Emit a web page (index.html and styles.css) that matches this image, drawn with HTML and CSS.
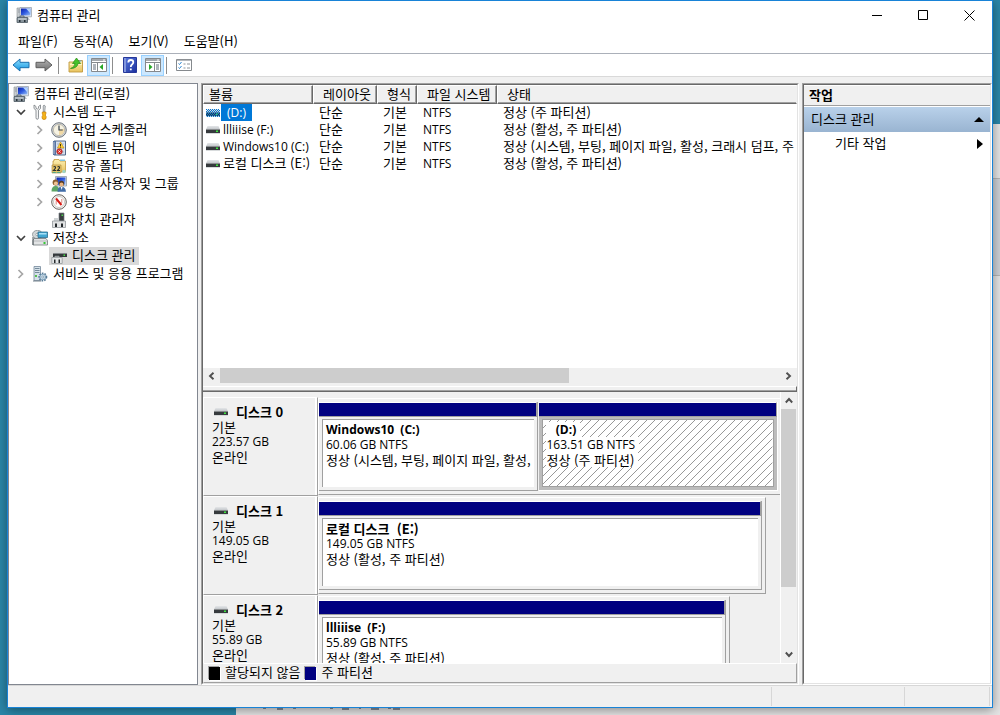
FILE: index.html
```html
<!DOCTYPE html>
<html lang="ko">
<head>
<meta charset="utf-8">
<title>컴퓨터 관리</title>
<link rel="stylesheet" href="styles.css">
</head>
<body>
<svg class="sprite" aria-hidden="true">
  <defs>
    <linearGradient id="gBlue" x1="0" y1="0" x2="1" y2="1"><stop offset="0" stop-color="#0a1fa8"/><stop offset=".5" stop-color="#2f5be0"/><stop offset="1" stop-color="#9cc4f5"/></linearGradient>
    <linearGradient id="gBack" x1="0" y1="0" x2="0" y2="1"><stop offset="0" stop-color="#8fe0ff"/><stop offset="1" stop-color="#1193e0"/></linearGradient>
    <linearGradient id="gFwd" x1="0" y1="0" x2="0" y2="1"><stop offset="0" stop-color="#b4b4b4"/><stop offset="1" stop-color="#6e6e6e"/></linearGradient>
    <linearGradient id="gFold" x1="0" y1="0" x2="0" y2="1"><stop offset="0" stop-color="#fdf0b4"/><stop offset="1" stop-color="#e8c25c"/></linearGradient>
    <linearGradient id="gHelp" x1="0" y1="0" x2="1" y2="1"><stop offset="0" stop-color="#5a7be0"/><stop offset="1" stop-color="#1b2f9c"/></linearGradient>
    <linearGradient id="gTop" x1="0" y1="0" x2="0" y2="1"><stop offset="0" stop-color="#e4e6e8"/><stop offset="1" stop-color="#bfc3c7"/></linearGradient>
    <symbol id="computer" viewBox="0 0 16 16">
      <path d="M1 1h4v9H1z" fill="#c9cdd0" stroke="#8b9095" stroke-width=".6"/><path d="M2 3h2M2 5h2" stroke="#7d858c" stroke-width=".7"/>
      <path d="M4 .5h11.5v9.300H4z" fill="#eceff2" stroke="#9aa3ad" stroke-width=".8"/><path d="M5 1.500h9.500v7H5z" fill="url(#gBlue)"/><path d="M10 1.500h4.500v5z" fill="#b4d4fa"/>
      <path d="M8 10h4l2 3H7z" fill="#b9c1ca"/>
      <path d="M1 10.500h10.500v5H1z" fill="#87939b" stroke="#4e5b63" stroke-width=".8"/><path d="M2 12h8.500" stroke="#dfe6ea"/><path d="M3 13h1.500v2H3zM8 13h1.500v2H8z" fill="#29333a"/><path d="M4 10.500V9h4v1.500" fill="none" stroke="#5b6870"/>
    </symbol>
    <symbol id="tools" viewBox="0 0 16 16">
      <path d="M2 1v3.500l2 1.700v7.600c0 2 2.500 2 2.500 0V6.200l2-1.700V1L6.500 2.500v1.800l-1.200.8L4 4.300V2.500z" fill="#f2f3f4" stroke="#777c81" stroke-width=".8"/>
      <path d="M12 1l1.300 1-.6 6h-1.400L11.200 2z" fill="#d9dde0" stroke="#777c81" stroke-width=".7"/>
      <path d="M10.300 8h3.600v2l-.7 1 .9 1.500v1.500c0 2-4 2-4 0v-1.500l.9-1.500-.7-1z" fill="#f5b418" stroke="#c77f08" stroke-width=".7"/>
    </symbol>
    <symbol id="clock" viewBox="0 0 16 16">
      <circle cx="8" cy="8" r="7.300" fill="#d4d8dc" stroke="#6f757b"/><circle cx="8" cy="8" r="5.600" fill="#f7f3e3" stroke="#a8a08a" stroke-width=".6"/><path d="M8 8l5-1a5 5 0 0 1-5 6z" fill="#f1d9a4"/><path d="M8 3.500V8h3.700" fill="none" stroke="#38434d" stroke-width="1.200"/>
    </symbol>
    <symbol id="events" viewBox="0 0 16 16">
      <path d="M3 1h11.500v14H3z" fill="#d6e0ee" stroke="#53698a"/><path d="M2 1h3v14H2z" fill="#5573a3"/><path d="M1 3h3M1 5h3M1 7h3M1 9h3M1 11h3M1 13h3" stroke="#d0d7df" stroke-width=".8"/>
      <path d="M6 4h7M6 8h7M6 12h7" stroke="#8b9cb5" stroke-width=".6"/><path d="M9.500 2l3.500 6H6.500z" fill="#ffd23a" stroke="#c58c08" stroke-width=".6"/><path d="M9.500 4v2.400M9.500 6.900v.7" stroke="#332200" stroke-width=".9"/>
      <circle cx="8.500" cy="11.500" r="2.800" fill="#d9302c" stroke="#981713" stroke-width=".5"/><path d="M7.400 10.400l2.200 2.200M9.600 10.400l-2.200 2.200" stroke="#fff" stroke-width=".8"/>
    </symbol>
    <symbol id="shared" viewBox="0 0 16 16">
      <path d="M3 3V1.500h5l1 1.500h5.500v11H2V3z" fill="url(#gFold)" stroke="#c39b3c" stroke-width=".8"/><path d="M9 1.500h5V3H9z" fill="#7fc3df"/>
      <path d="M1 7h9v8H1z" fill="#e8c66a" stroke="#a88436" stroke-width=".6"/>
      <path d="M2.500 9q1.500-1 2 0t-2 3.500h2.500M6.500 9q1.500-1 2 0t-2 3.500H9" fill="none" stroke="#29302f" stroke-width="1.100"/><path d="M1 15q2-2.500 4.500 0 2-2.500 4.500 0z" fill="#52a888"/><circle cx="13" cy="13.500" r="1.800" fill="#9fd5c5"/>
    </symbol>
    <symbol id="users" viewBox="0 0 16 16">
      <path d="M4.500.5h11v9.500h-11z" fill="#dfe4ea" stroke="#929ba5" stroke-width=".8"/><path d="M5.500 1.500h9v7.500h-9z" fill="url(#gBlue)"/>
      <circle cx="4.500" cy="6.500" r="2.900" fill="#8b5f31"/><circle cx="4.900" cy="7.400" r="2" fill="#efc394"/><path d="M.5 15.500q0-5.500 4-5.500t4 5.500z" fill="#5da464"/>
      <circle cx="10.500" cy="7.500" r="2.700" fill="#553b25"/><circle cx="10.500" cy="8.500" r="2" fill="#e8b482"/><path d="M6.500 15.700q0-5 4-5t4.500 5z" fill="#426da8"/><path d="M9.700 11h1.800l-.8 3z" fill="#fff"/>
    </symbol>
    <symbol id="perf" viewBox="0 0 16 16">
      <circle cx="8" cy="8" r="7.300" fill="#f5f5f5" stroke="#68625c"/><circle cx="8" cy="8" r="5.500" fill="#fff" stroke="#b8b0a8" stroke-width=".7"/><path d="M5.200 10.500V6.500M10.800 9V5" stroke="#d9867e" stroke-width="1"/><path d="M5 4.500l5.500 6.500" stroke="#d81a14" stroke-width="2"/>
    </symbol>
    <symbol id="device" viewBox="0 0 16 16">
      <path d="M8 1h5v10H8z" fill="#383d40" stroke="#777d81" stroke-width=".7"/><path d="M10.500 2.500h1.500v1.500h-1.500z" fill="#4cd34c"/><path d="M3 6h5v3H3z" fill="#d0d4d6"/>
      <path d="M1.500 9h13v6.500h-13z" fill="#e0e2e3" stroke="#92979a" stroke-width=".8"/><path d="M4 11.500h2V15H4zM10 11.500h2V15h-2z" fill="#24292c"/>
    </symbol>
    <symbol id="storage" viewBox="0 0 16 16">
      <ellipse cx="5.500" cy="4.500" rx="5" ry="4.200" fill="#d2d7d8" stroke="#858d91" stroke-width=".8"/><circle cx="5" cy="4.500" r="1.200" fill="#fff" stroke="#7b8488" stroke-width=".6"/>
      <path d="M6 2h9.500v5.500H6z" fill="#42a7d2" stroke="#2a6c8e" stroke-width=".8"/><path d="M7 3h7.500v1.500H7z" fill="#a9e0f6"/>
      <path d="M2 8.500h12l1.500 2v4.500H1v-4.500z" fill="#e2e4e5" stroke="#72787c" stroke-width=".8"/><path d="M1.500 11H15" stroke="#a6abad" stroke-width=".7"/><path d="M11.500 12h2v2h-2z" fill="#35c835"/><path d="M1 7v8" stroke="#4f585c"/>
    </symbol>
    <symbol id="diskmgmt" viewBox="0 0 16 16">
      <path d="M4 4h11l1 1.500H2z" fill="#d4d7d9"/><path d="M2 5.500h14V9H2z" fill="#35393c"/><path d="M12.500 6.500H14V8h-1.500z" fill="#43e043"/>
      <path d="M.8 9.500h10.400v6H.8z" fill="#e4e6e7" stroke="#8d9295" stroke-width=".7"/><path d="M3 11.500h1.500V15H3zM7.500 11.500H9V15H7.500z" fill="#24292c"/><path d="M4 9.500V8.300h4v1.200" fill="none" stroke="#a9adaf"/>
    </symbol>
    <symbol id="services" viewBox="0 0 16 16">
      <path d="M2 .5h6.500v14H2z" fill="#d6e2ea" stroke="#74889a" stroke-width=".8"/><path d="M3 2.500h4.500M3 4.500h4.500M3 6.500h4.500" stroke="#5c7387" stroke-width=".8"/><path d="M3 9h2v2H3z" fill="#56c04e"/><path d="M1 15h8" stroke="#76838d"/>
      <circle cx="10.800" cy="11" r="3.600" fill="#bed4e4" stroke="#557894" stroke-width="1.800" stroke-dasharray="1.500 1.100"/><circle cx="10.800" cy="11" r="2.800" fill="#cfe1ee" stroke="#6f93ad" stroke-width=".7"/><circle cx="10.800" cy="11" r="1.100" fill="#fff" stroke="#557894" stroke-width=".6"/>
    </symbol>
    <symbol id="drive" viewBox="0 0 14 8">
      <path d="M1.500 0h11L14 3.500H0z" fill="url(#gTop)"/><path d="M0 3.500h14V7H0z" fill="#363a3d"/><path d="M0 7h14v.8H0z" fill="#cfd2d4"/><path d="M10 4.500h2V6h-2z" fill="#3de53d"/>
    </symbol>
    <symbol id="open" viewBox="0 0 10 10"><path d="M1 3l4 4 4-4" fill="none" stroke="#404040" stroke-width="1.700"/></symbol>
    <symbol id="closed" viewBox="0 0 10 10"><path d="M2.500 1l4 4-4 4" fill="none" stroke="#a6a6a6" stroke-width="1.700"/></symbol>
    <symbol id="arrow" viewBox="0 0 8 8"><path d="M6 .8L2.500 4 6 7.200" fill="none" stroke="#505050" stroke-width="1.900"/></symbol>
    <symbol id="back" viewBox="0 0 18 14"><path d="M1 7l7-6v3.300h9v5.400H8V13z" fill="url(#gBack)" stroke="#1a6fae"/></symbol>
    <symbol id="forward" viewBox="0 0 18 14"><path d="M17 7l-7-6v3.300H1v5.400h9V13z" fill="url(#gFwd)" stroke="#5e5e5e"/></symbol>
    <symbol id="up" viewBox="0 0 16 16">
      <path d="M1 5h6l1-1.500h6.500V15H1z" fill="url(#gFold)" stroke="#bf983c" stroke-width=".9"/><path d="M2 7.500h12" stroke="#fff3c4"/><path d="M10.500 4h3" stroke="#5ea8d6"/>
      <path d="M2.500 11.500q4-1 4.500-5H4.500l4-5.500 4 5.500h-2.400Q9 11.500 2.500 11.500z" fill="#46c22b" stroke="#278b14" stroke-width=".7"/>
    </symbol>
    <symbol id="paneLeft" viewBox="0 0 16 14"><path d="M.5.5h15v13H.5z" fill="#fff" stroke="#85898d"/><path d="M1 1h14v2H1z" fill="#a4a9ae"/><path d="M1 4.500h14" stroke="#85898d"/><path d="M12 2h2" stroke="#fff"/><path d="M6.500 5v8" stroke="#85898d"/><path d="M2 7h3M2 9h3M2 11h3" stroke="#5e6b78"/><path d="M12 6v6L8.500 9z" fill="#26a826"/></symbol>
    <symbol id="paneRight" viewBox="0 0 16 14"><path d="M.5.5h15v13H.5z" fill="#fff" stroke="#85898d"/><path d="M1 1h14v2H1z" fill="#a4a9ae"/><path d="M1 4.500h14" stroke="#85898d"/><path d="M12 2h2" stroke="#fff"/><path d="M9.500 5v8" stroke="#85898d"/><path d="M11 7h3M11 9h3M11 11h3" stroke="#5e6b78"/><path d="M4 6v6l3.500-3z" fill="#26a826"/></symbol>
    <symbol id="help" viewBox="0 0 14 16"><path d="M.5.5h13v15H.5z" fill="url(#gHelp)" stroke="#26389a"/><path d="M1 1h2v14H1z" fill="#8296dc"/><path d="M5.300 5.500q0-2.500 2.500-2.500t2.500 2.300q0 1.300-1.300 2.200Q7.800 8.300 7.800 10M7.800 11.500v1.700" fill="none" stroke="#fff" stroke-width="1.800"/></symbol>
    <symbol id="checks" viewBox="0 0 16 12"><path d="M.5.5h15v11H.5z" fill="#fff" stroke="#85898d"/><path d="M1 1.300h14" stroke="#a4a9ae"/><path d="M2.500 4.500l1 1 2-2.500M2.500 8.500l1 1 2-2.500" fill="none" stroke="#2e86d0"/><path d="M7.500 5h2M11 5h3M7.500 9h2M11 9h3" stroke="#8e9499"/></symbol>
    <pattern id="hatch" width="8" height="8" patternUnits="userSpaceOnUse"><path d="M-1 9L9-1M-1 1l2-2M7 9l2-2" stroke="#8c8c8c" stroke-width=".9"/></pattern>
    <pattern id="dots" width="2" height="2" patternUnits="userSpaceOnUse"><path d="M0 0h1v1H0zM1 1h1v1H1z" fill="#0078d7"/></pattern>
  </defs>
</svg>

<div class="backdrop" aria-hidden="true">
  <div class="backdrop-bar"></div>
  <svg class="backdrop-marks" width="150" height="2"><path d="M1 0h3M15 1h6M31 0h3M68 0h3M80 1h7M97 0h2M109 1h8M126 0h3M131 1h7" stroke="#28364a"/></svg>
</div>

<main class="window">
  <header class="titlebar">
    <svg class="icon"><use href="#computer"/></svg>
    <h1 class="title">컴퓨터 관리</h1>
    <button class="caption" aria-label="최소화"><svg width="11" height="11"><path d="M0 5.500h10" stroke="#000"/></svg></button>
    <button class="caption" aria-label="최대화"><svg width="11" height="11"><path d="M.5.5h9v9h-9z" fill="none" stroke="#000"/></svg></button>
    <button class="caption" aria-label="닫기"><svg width="11" height="11"><path d="M.5.5l10 10M10.500.5l-10 10" stroke="#000"/></svg></button>
  </header>

  <nav class="menubar">
    <button>파일(F)</button><button>동작(A)</button><button>보기(V)</button><button>도움말(H)</button>
  </nav>

  <div class="toolbar" role="toolbar">
    <button aria-label="뒤로"><svg width="18" height="14"><use href="#back"/></svg></button>
    <button aria-label="앞으로"><svg width="18" height="14"><use href="#forward"/></svg></button>
    <i class="sep"></i>
    <button class="wide" aria-label="위로"><svg width="16" height="16"><use href="#up"/></svg></button>
    <button class="wide on" aria-label="콘솔 트리"><svg width="16" height="14"><use href="#paneLeft"/></svg></button>
    <i class="sep"></i>
    <button class="wide" aria-label="도움말"><svg width="14" height="16"><use href="#help"/></svg></button>
    <button class="wide on" aria-label="작업 창"><svg width="16" height="14"><use href="#paneRight"/></svg></button>
    <i class="sep"></i>
    <button class="wide" aria-label="속성"><svg width="16" height="12"><use href="#checks"/></svg></button>
  </div>

  <div class="panes">
    <aside class="tree">
      <ul>
        <li class="node root"><svg class="icon"><use href="#computer"/></svg><span>컴퓨터 관리(로컬)</span></li>
        <li class="node l1"><svg class="chev"><use href="#open"/></svg><svg class="icon"><use href="#tools"/></svg><span>시스템 도구</span></li>
        <li class="node l2"><svg class="chev"><use href="#closed"/></svg><svg class="icon"><use href="#clock"/></svg><span>작업 스케줄러</span></li>
        <li class="node l2"><svg class="chev"><use href="#closed"/></svg><svg class="icon"><use href="#events"/></svg><span>이벤트 뷰어</span></li>
        <li class="node l2"><svg class="chev"><use href="#closed"/></svg><svg class="icon"><use href="#shared"/></svg><span>공유 폴더</span></li>
        <li class="node l2"><svg class="chev"><use href="#closed"/></svg><svg class="icon"><use href="#users"/></svg><span>로컬 사용자 및 그룹</span></li>
        <li class="node l2"><svg class="chev"><use href="#closed"/></svg><svg class="icon"><use href="#perf"/></svg><span>성능</span></li>
        <li class="node leaf"><svg class="icon"><use href="#device"/></svg><span>장치 관리자</span></li>
        <li class="node l1"><svg class="chev"><use href="#open"/></svg><svg class="icon"><use href="#storage"/></svg><span>저장소</span></li>
        <li class="node leaf selected"><svg class="icon"><use href="#diskmgmt"/></svg><span>디스크 관리</span></li>
        <li class="node l1"><svg class="chev"><use href="#closed"/></svg><svg class="icon"><use href="#services"/></svg><span>서비스 및 응용 프로그램</span></li>
      </ul>
    </aside>

    <section class="center sunken">
      <div class="volumes">
        <table>
          <colgroup><col class="c-name"><col class="c-layout"><col class="c-type"><col class="c-fs"><col></colgroup>
          <thead><tr><th>볼륨</th><th>레이아웃</th><th>형식</th><th>파일 시스템</th><th>상태</th></tr></thead>
          <tbody>
            <tr><td class="name selected"><svg class="drive"><use href="#drive"/><rect width="14" height="8" fill="url(#dots)"/></svg><span class="latin">(D:)</span></td><td>단순</td><td>기본</td><td class="latin">NTFS</td><td>정상 (주 파티션)</td></tr>
            <tr><td class="name"><svg class="drive"><use href="#drive"/></svg><span class="latin">llliiise (F:)</span></td><td>단순</td><td>기본</td><td class="latin">NTFS</td><td>정상 (활성, 주 파티션)</td></tr>
            <tr><td class="name"><svg class="drive"><use href="#drive"/></svg><span class="latin">Windows10 (C:)</span></td><td>단순</td><td>기본</td><td class="latin">NTFS</td><td>정상 (시스템, 부팅, 페이지 파일, 활성, 크래시 덤프, 주</td></tr>
            <tr><td class="name"><svg class="drive"><use href="#drive"/></svg><span>로컬 디스크 (E:)</span></td><td>단순</td><td>기본</td><td class="latin">NTFS</td><td>정상 (활성, 주 파티션)</td></tr>
          </tbody>
        </table>
        <div class="hscroll">
          <svg class="arr"><use href="#arrow"/></svg>
          <div class="htrack"><div class="thumb" style="width:62.300%"></div></div>
          <svg class="arr right"><use href="#arrow"/></svg>
        </div>
      </div>
      <div class="splitter"></div>
      <div class="disks">
        <div class="disk-list">
          <article class="disk">
            <div class="disk-label"><h2><svg class="drive"><use href="#drive"/></svg>디스크 0</h2><p>기본</p><p class="latin">223.57 GB</p><p>온라인</p></div>
            <div class="graph-area"><div class="graph" style="width:100.400%">
              <div class="part" style="flex-grow:219"><div class="bar"></div><div class="part-body"><div class="part-info"><h3 class="latin">Windows10&nbsp; (C:)</h3><p class="latin">60.06 GB NTFS</p><p>정상 (시스템, 부팅, 페이지 파일, 활성,</p></div></div></div>
              <div class="part active" style="flex-grow:238"><div class="bar"></div><div class="part-body"><div class="part-info"><svg class="hatching"><rect width="100%" height="100%" fill="url(#hatch)"/></svg><h3 class="latin"><span>&nbsp;&nbsp; (D:)</span></h3><p class="latin"><span>163.51 GB NTFS</span></p><p><span>정상 (주 파티션)</span></p></div></div></div>
            </div></div>
          </article>
          <article class="disk">
            <div class="disk-label"><h2><svg class="drive"><use href="#drive"/></svg>디스크 1</h2><p>기본</p><p class="latin">149.05 GB</p><p>온라인</p></div>
            <div class="graph-area"><div class="graph" style="width:97%">
              <div class="part"><div class="bar"></div><div class="part-body"><div class="part-info"><h3>로컬 디스크&nbsp; (E:)</h3><p class="latin">149.05 GB NTFS</p><p>정상 (활성, 주 파티션)</p></div></div></div>
            </div></div>
          </article>
          <article class="disk">
            <div class="disk-label"><h2><svg class="drive"><use href="#drive"/></svg>디스크 2</h2><p>기본</p><p class="latin">55.89 GB</p><p>온라인</p></div>
            <div class="graph-area"><div class="graph" style="width:89.200%">
              <div class="part"><div class="bar"></div><div class="part-body"><div class="part-info"><h3 class="latin">llliiise&nbsp; (F:)</h3><p class="latin">55.89 GB NTFS</p><p>정상 (활성, 주 파티션)</p></div></div></div>
            </div></div>
          </article>
        </div>
        <div class="vscroll">
          <svg class="arr up"><use href="#arrow"/></svg>
          <div class="vtrack"><div class="thumb" style="height:75%"></div></div>
          <svg class="arr down"><use href="#arrow"/></svg>
        </div>
      </div>
      <footer class="legend"><i class="swatch black"></i><span>할당되지 않음</span><i class="swatch navy"></i><span>주 파티션</span></footer>
    </section>

    <aside class="actions sunken">
      <h2 class="actions-title">작업</h2>
      <button class="group"><span>디스크 관리</span><svg width="10" height="5"><path d="M0 5l5-5 5 5z"/></svg></button>
      <button class="more"><span>기타 작업</span><svg width="6" height="10"><path d="M0 0l6 5-6 5z"/></svg></button>
    </aside>
  </div>

  <footer class="status"><span></span><span></span><span></span></footer>
</main>
</body>
</html>
```
FILE: styles.css
```css
* { box-sizing: border-box; margin: 0; padding: 0; }
body {
  height: 100vh;
  overflow: hidden;
  background: #2a86a8;
  color: #000;
  font: 13px/18px "Noto Sans CJK KR", sans-serif;
}
button { font: inherit; color: inherit; background: none; border: 0; white-space: nowrap; }
h1, h2, h3 { font-size: 13px; }
ul { list-style: none; }
svg { flex: none; display: block; }
.latin { font-family: "Open Sans", "Noto Sans CJK KR", sans-serif; font-size: 12px; }
.sprite { position: absolute; width: 0; height: 0; }
.icon { width: 16px; height: 16px; }
.drive { width: 14px; height: 8px; }

/* Other windows behind the console */
.backdrop { position: absolute; inset: 124px 0 0 236px; background: #e4e4e4; }
.backdrop-bar { position: absolute; right: 0; top: 54px; width: 8px; height: 98px; background: #ccd0d5; border: solid #b4b4b4; border-width: 1px 0; }
.backdrop-marks { position: absolute; left: 26px; bottom: 5px; }

.window {
  position: relative;
  display: flex;
  flex-direction: column;
  height: calc(100vh - 7px);
  margin: 0 7px 7px;
  background: #f0f0f0;
  border: 1px solid #1883d7;
  box-shadow: 0 2px 10px rgba(0, 0, 0, .4);
}
.titlebar { display: flex; align-items: center; height: 30px; padding: 0 0 2px 8px; background: #fff; }
.title { flex: 1; margin-left: 5px; font-weight: 400; }
.caption { display: grid; place-items: center; width: 46px; height: 28px; }
.menubar { display: flex; gap: 15px; height: 23px; padding: 0 10px 2px; background: #fff; border-bottom: 1px solid #abb0b9; }
.toolbar { display: flex; align-items: center; height: 23px; padding-left: 1px; background: #fff; border-bottom: 1px solid #d9d9d9; }
.toolbar button { display: grid; place-items: center; width: 23px; height: 21px; }
.toolbar .on { background: #cce8ff; border: 1px solid #99d1ff; }
.toolbar .sep { width: 1px; height: 17px; margin: 0 3px; background: #8d8d8d; }
.toolbar .on + .sep { margin-left: 2px; }
.toolbar .sep + .wide { margin-left: 2px; }

.panes { flex: 1; min-height: 0; display: grid; grid-template: minmax(0, 1fr) / 190px minmax(0, 1fr) 190px; gap: 3px; padding-top: 6px; }
.sunken {
  position: relative;
  border: 1px solid;
  border-color: #a0a0a0 #fff #fff #a0a0a0;
}
.sunken::after { content: ""; position: absolute; inset: 0; border: 1px solid; border-color: #696969 #e3e3e3 #e3e3e3 #696969; pointer-events: none; }

.tree { background: #fff; border: 1px solid #828790; padding: 1px 0; overflow: hidden; }
.node { display: flex; align-items: center; height: 18px; white-space: nowrap; }
.node span { padding: 0 4px 2px; line-height: 16px; }
.node .chev { width: 10px; height: 10px; margin-right: 6px; }
.root { padding-left: 4px; }
.root span { padding-left: 5px; }
.l1 { padding-left: 7px; }
.l1 .icon + span { padding-left: 5px; }
.l2 { padding-left: 26px; }
.leaf { margin-left: 40px; padding-left: 2px; width: max-content; }
.leaf span, .l2 span { padding-left: 5px; }
.selected.node { background: #d9d9d9; }

.center { display: grid; grid-template: 301px 6px minmax(0, 1fr) 20px / minmax(0, 1fr); padding: 1px; }
.volumes { display: flex; flex-direction: column; background: #fff; overflow: hidden; }
table { width: 100%; table-layout: fixed; border-collapse: separate; border-spacing: 0; }
.c-name { width: 110px; }
.c-layout { width: 64px; }
.c-type { width: 40px; }
.c-fs { width: 80px; }
th {
  height: 19px;
  padding: 0 0 2px 9px;
  background: #f0f0f0;
  border: 1px solid;
  border-color: #fff #696969 #696969 #fff;
  box-shadow: inset -1px -1px #a0a0a0;
  font-weight: 400;
  line-height: 15px;
  text-align: left;
  white-space: nowrap;
}
th:first-child { padding-left: 5px; }
th:last-child { border-right-color: #f0f0f0; box-shadow: inset 0 -1px #a0a0a0; }
td { height: 17px; padding: 0 0 2px 6px; line-height: 15px; white-space: nowrap; }
td.latin { padding: 1px 0 1px 6px; }
.name { display: flex; align-items: center; padding: 0 0 0 3px; }
.name span { margin-left: 1px; padding: 0 2px 2px; }
.name .latin { padding: 1px 2px; }
.name.selected span { padding: 1px 6px; background: #0078d7; color: #fff; }
.hscroll { display: flex; align-items: center; height: 18px; margin-top: auto; padding-bottom: 3px; background: #f0f0f0; }
.arr { width: 17px; height: 8px; }
.right { transform: rotate(180deg); }
.up { transform: rotate(90deg); }
.down { transform: rotate(-90deg); }
.htrack { flex: 1; height: 15px; }
.thumb { height: 100%; background: #cdcdcd; }
.splitter { border: solid; border-width: 1px 1px 1px 0; border-color: #fff #696969 #696969; box-shadow: inset 0 -1px #a0a0a0; }

.disks { display: grid; grid-template: minmax(0, 1fr) / minmax(0, 1fr) 17px; }
.disk-list { padding-top: 5px; overflow: hidden; }
.disk { display: grid; grid-template-columns: 115px minmax(0, 1fr); height: 99px; line-height: 15px; white-space: nowrap; }
.disk-label { padding: 6px 0 0 8px; border: 1px solid; border-color: #fff #a0a0a0 #a0a0a0 #fff; box-shadow: inset -2px 0 #fff; }
.disk-label h2 { display: flex; align-items: center; gap: 8px; padding-left: 2px; line-height: 15px; }
.graph-area { padding: 1px 0; }
.graph { display: flex; gap: 1px; height: 97px; padding: 3px 3px 3px 0; border: 1px solid; border-color: #fff #a0a0a0 #a0a0a0 #fff; }
.part { flex: 1 1 0; min-width: 0; display: flex; flex-direction: column; border-right: 1px solid #a0a0a0; }
.bar { height: 15px; background: #000080; border: solid; border-width: 1px 1px 1px 0; border-color: #fff #a0a0a0 #a0a0a0; }
.part-body { flex: 1; padding: 2px 3px 3px; border-bottom: 1px solid #a0a0a0; }
.part-info { position: relative; height: 100%; padding: 2px 0 0 3px; background: #fff; border: solid #a0a0a0; border-width: 1px 0 0 1px; overflow: hidden; }
.part-info h3, .part-info p { height: 15px; line-height: 15px; }
.active { border-right-color: #fff; }
.active .part-body { background: #bcbcbc; border-bottom-color: #fff; }
.active .part-info { border-width: 1px; }
.active .part-info span { position: relative; display: inline-block; padding-right: 4px; background: #fff; }
.hatching { position: absolute; inset: 0; width: 100%; height: 100%; }

.vscroll { display: flex; flex-direction: column; align-items: center; border-left: 1px solid #fff; padding-right: 1px; }
.vscroll .arr { width: 8px; height: 17px; }
.vtrack { flex: 1; width: 15px; }
.legend { display: flex; align-items: center; padding-left: 5px; border: 1px solid; border-color: #fff #a0a0a0 #a0a0a0 #f0f0f0; line-height: 16px; white-space: nowrap; }
.swatch { width: 11px; height: 13px; margin-right: 5px; box-shadow: -1px -1px #a0a0a0, 1px 1px #fff; }
.legend span { margin-right: 5px; padding-bottom: 2px; }
.black { background: #000; }
.navy { background: #000080; }

.actions { display: flex; flex-direction: column; padding: 1px; background: #fff; }
.actions-title { height: 21px; padding-left: 5px; line-height: 17px; background: #f0f0f0; border-top: 1px solid #fff; border-bottom: 1px solid #a0a0a0; }
.group, .more { display: flex; align-items: center; justify-content: space-between; height: 25px; padding: 0 6px 0 7px; }
.group span, .more span { padding-bottom: 2px; }
.group { margin-top: 1px; background: linear-gradient(#b9d1ea, #99b4d1); }
.more { padding: 0 7px 0 31px; height: 24px; }

.status { display: grid; grid-template-columns: minmax(0, 1fr) 133px 85px; height: 22px; padding: 1px 2px 1px 0; border-top: 1px solid #d7d7d7; }
.status span { border-right: 1px solid #d7d7d7; }
```
